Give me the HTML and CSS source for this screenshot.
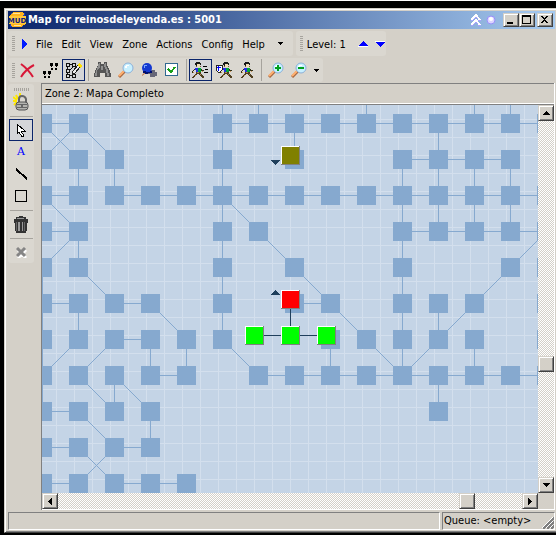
FILE: index.html
```html
<!DOCTYPE html>
<html lang="en">
<head>
<meta charset="utf-8">
<title>Map for reinosdeleyenda.es : 5001</title>
<link rel="stylesheet" href="styles.css">
</head>
<body>
<svg class="defs" aria-hidden="true">
  <symbol id="walker" viewBox="0 0 12 16">
    <path fill="#181818" d="M4 0h4v1h1v2H8V2H5v2H4V3H3V1h1z"/>
    <path fill="#f0e0b8" d="M5 2h3v3H5z"/>
    <path fill="#806040" d="M4 4h1v1H4zM8 4h1v1H8z"/>
    <path fill="#00a838" d="M5 6h4v4H6V7H5z"/>
    <path fill="#2430e8" d="M3 6h3v4H4V8H3z"/>
    <path fill="#303018" d="M2 7h1v1H2v1H1v2H0V9h1V8h1zM9 7h1v1h2v1H9z"/>
    <path fill="#c89050" d="M1 10h1v1H1zM10 9h1v1h-1z"/>
    <path fill="#504020" d="M4 10h5v2h1v1h1v1h1v2h-2v-1H9v-1H8v-1H7v-1H5v1H4v1H3v1H2v1H0v-1h1v-1h1v-1h1v-1h1z"/>
    <path fill="#b08858" d="M5 10h2v1H5zM3 13h1v1H3zM8 12h1v1H8z"/>
  </symbol>
  <symbol id="lens" viewBox="0 0 16 16">
    <path stroke="#a86840" stroke-width="3" d="M1 15l6-6"/><path stroke="#ffb070" stroke-width="2" d="M1 14l5-5"/>
    <circle cx="10" cy="6" r="5" fill="#c8f0ff" stroke="#8cb0d8" stroke-width="1"/><path fill="#fff" d="M8 3h3v1H9v2H7V4h1z"/>
  </symbol>
</svg>

<div class="window">
  <header class="title">
    <svg class="logo" width="17" height="16" viewBox="0 0 17 16" aria-hidden="true">
      <path fill="#183cc0" d="M2 1h14v3H2zM1 12h13v3H1z"/>
      <path fill="#ffb41e" d="M2 2l3-2h8l2 2-2 2H5L0 6V4zM1 13l2-2h12l2-2v3l-3 1-2 2H4z"/>
      <path fill="#ffe49a" d="M4 1h7v1H4zM5 13h7v1H5z"/><path fill="#ffc83c" d="M0 4h17v8H0z"/>
      <text class="logo-text" x="8" y="11" text-anchor="middle">MUD</text>
    </svg>
    <h1>Map for reinosdeleyenda.es : 5001</h1>
    <button class="ghost" aria-label="Roll up"><svg width="11" height="12" fill="none" stroke="#fff" stroke-width="2"><path stroke="#a8a0ff" d="M1 7l5-5 4 5M1 12l5-5 4 5"/><path d="M1 6l5-5 4 5M1 11l5-5 4 5"/></svg></button>
    <button class="ghost" aria-label="Stay on top"><svg class="smooth" width="10" height="10"><circle cx="5" cy="5" r="4" fill="#dcd4ff" stroke="#9890f8"/><circle cx="5" cy="4" r="2" fill="#fff"/></svg></button>
    <div class="caption-buttons">
      <button class="raised cap" aria-label="Minimize"><svg width="10" height="10"><path d="M1 7h6v2H1z"/></svg></button>
      <button class="raised cap" aria-label="Maximize"><svg width="10" height="10"><path fill-rule="evenodd" d="M0 0h9v9H0zM1 2v6h7V2z"/></svg></button>
      <button class="raised cap close" aria-label="Close"><svg width="10" height="10"><path d="M1 1h2v1h1v1h1V2h1V1h2v1H7v1H6v1H5v1h1v1h1v1h1v1H6V7H5V6H4v1H3v1H1V7h1V6h1V5h1V4H3V3H2V2H1z"/></svg></button>
    </div>
  </header>

  <div class="bars">
    <nav class="band menu">
      <i class="grip"></i>
      <svg class="play" width="6" height="10" aria-hidden="true"><path fill="#001cff" d="M0 0l5 5-5 5z"/></svg>
      <button>File</button><button>Edit</button><button>View</button><button>Zone</button><button>Actions</button><button>Config</button><button>Help</button>
      <button class="more" aria-label="More menus"><svg width="5" height="3"><path d="M0 0h5v1H4v1H3v1H2V2H1V1H0z"/></svg></button>
    </nav>
    <div class="band level">
      <i class="grip"></i>
      <span>Level: 1</span>
      <button class="up" aria-label="Level up"><svg width="10" height="6"><path fill="#00f" d="M5 0l5 5H0z"/><path fill="#fff" d="M0 5h10v1H0z"/></svg></button>
      <button class="down" aria-label="Level down"><svg width="10" height="6"><path fill="#fff" d="M0 0h10v1H0z"/><path fill="#00f" d="M0 1h10L5 6z"/></svg></button>
    </div>
  </div>

  <div class="bars">
    <div class="band tools" role="toolbar" aria-label="Map tools">
      <i class="grip"></i>
      <button aria-label="Close map"><svg class="smooth" width="15" height="15" fill="none" stroke="#d81838" stroke-width="2"><path d="M1 1q7 5 12 13M14 2Q6 6 1 14"/></svg></button>
      <button aria-label="Follow"><svg width="17" height="15"><path d="M8 0h3v3h-1v1H9V3H8zM13 0h3v3h-1v1h-1V3h-1zM9 5h2v2H9zM13 5h2v2h-2zM1 8h3v3H3v1H2v-1H1zM6 8h3v3H8v1H7v-1H6zM2 13h2v2H2zM6 13h2v2H6z"/></svg></button>
      <button class="on" aria-label="Create map" aria-pressed="true"><svg width="17" height="16"><path fill="none" stroke="#111" d="M1 1h3v3H1zM7 1h3v3H7zM1 7h3v3H1zM1 12h3v3H1zM4 2h3M2 4v3M2 10v2M4 9l5-5M4 13h4M7 12h3v3H7z"/><path fill="#eee" stroke="#222" d="M7 13l1-4 6-7 2 2-6 7z"/><path fill="#ffe000" d="M12 3l2-2 3 3-2 2z"/></svg></button>
      <i class="sep"></i>
      <button aria-label="Find"><svg width="17" height="16"><path fill="#555" d="M4 0h3v2h3V0h3v3l2 4 2 5v3h-6v-4H6v4H0v-3l2-5 2-4z"/><path fill="#909090" d="M5 1h1v4L3 9v5H1v-2l2-5zM11 1h1v3l2 4 1 6h-2l-1-6-2-4zM7 4h2v4H7z"/></svg></button>
      <button aria-label="Zoom"><svg class="smooth" width="16" height="16"><use href="#lens"/></svg></button>
      <button aria-label="Locate"><svg class="smooth" width="17" height="16"><path fill="#667" d="M7 8h8v2h2v4h-2v1h-5v-3H7z"/><path fill="#c07040" d="M2 13l4-4 1 1-5 4z"/><circle cx="7" cy="6" r="5" fill="#1438d0"/><path fill="#78a8ff" d="M4 3h3v1H5v2H4z"/><path fill="#001070" d="M3 9h3v1h4V9h2v2H8v1H5v-1H3z"/></svg></button>
      <button aria-label="Verify"><svg width="13" height="14"><path fill="#fff" stroke="#306890" d="M0.500 0.500h12v12h-12z"/><path fill="none" stroke="#18a018" stroke-width="2" d="M3 6l3 3 4-5"/></svg></button>
      <i class="sep"></i>
      <button class="on" aria-label="Fast walk" aria-pressed="true"><svg width="17" height="16"><use href="#walker" width="12" height="16"/><path d="M11 4h4v1h-4zM13 7h3v1h-3zM12 10h4v1h-4z"/></svg></button>
      <button aria-label="Safe walk"><svg width="17" height="16"><use href="#walker" x="5" width="12" height="16"/><path fill="#fff" stroke="#222" d="M1 3h6v5L4 11 1 8z"/><path fill="#00f" d="M3 4h1v1h2v1H4v3H3V6H2V5h1z"/></svg></button>
      <button aria-label="Walk"><svg width="12" height="16"><use href="#walker"/></svg></button>
      <i class="sep"></i>
      <button aria-label="Zoom in"><svg class="smooth" width="16" height="16"><use href="#lens"/><path fill="#00a020" d="M9 3h2v2h2v2h-2v2H9V7H7V5h2z"/></svg></button>
      <button aria-label="Zoom out"><svg class="smooth" width="16" height="16"><use href="#lens"/><path fill="#00a020" d="M7 5h6v2H7z"/></svg></button>
      <button class="more" aria-label="More tools"><svg width="5" height="3"><path d="M0 0h5v1H4v1H3v1H2V2H1V1H0z"/></svg></button>
    </div>
  </div>

  <main class="body">
    <aside class="side">
      <div class="palette" role="toolbar" aria-label="Drawing tools">
        <i class="grip wide"></i>
        <button aria-label="Lock"><svg class="smooth" width="17" height="18"><path stroke="#ffe800" stroke-width="2" d="M0 4l4 3M3 2l2 4M0 8h4M1 12l3-3M7 0v3"/><path fill="none" stroke="#666" stroke-width="2" d="M6 10V6q0-3 3-3t4 3v4"/><rect x="3" y="9" width="12" height="8" rx="3" fill="#b4b4b0" stroke="#555"/><path fill="#666" d="M4 11h10v1H4zM4 14h10v1H4zM8 11h2v4H8z"/></svg></button>
        <i class="rule"></i>
        <button class="on" aria-label="Select" aria-pressed="true"><svg width="10" height="15"><path fill="#fff" stroke="#000" d="M1 1v10l2-2 3 5 2-1-3-5h4z"/></svg></button>
        <button class="letter">A</button>
        <button aria-label="Line"><svg width="13" height="12"><path stroke="#000" stroke-width="2" d="M1 1l11 10"/></svg></button>
        <button aria-label="Rectangle"><svg width="12" height="12"><path fill="none" stroke="#000" d="M0.500 0.500h11v11h-11z"/></svg></button>
        <i class="rule"></i>
        <button aria-label="Delete"><svg width="14" height="17"><path fill="#333" d="M5 0h4v1h3v2h2v4h-1v8h-1v2H2v-2H1V7H0V3h2V1h3z"/><path fill="#999" d="M3 2h7v1H3zM4 6h2v9H4zM8 6h1v9H8z"/><path fill="#666" d="M2 6h1v9H2zM10 6h1v9h-1z"/></svg></button>
        <i class="rule"></i>
        <button aria-label="Cancel" disabled><svg class="smooth" width="11" height="11"><path stroke="#fff" stroke-width="3" d="M2 3l8 8M10 3l-8 8"/><path stroke="#858585" stroke-width="3" d="M1 1l8 8M9 1L1 9"/></svg></button>
      </div>
    </aside>
    <section class="view">
      <h2>Zone 2: Mapa Completo</h2>
      <div class="frame">
        <svg class="map" role="img" aria-label="Zone map">
          <g id="below" class="below"></g>
          <g class="links"><path d="M212 230.500h64M248.500 200v30"/></g>
          <g id="rooms"></g>
          <path class="arrow" d="M229 55h9v1h-1v1h-1v1h-1v1h-1v1h-1v-1h-1v-1h-1v-1h-1v-1h-1zM233 185h1v1h1v1h1v1h1v1h1v1h-9v-1h1v-1h1v-1h1v-1h1z"/>
        </svg>
        <div class="scroll vertical">
          <button class="raised" aria-label="Scroll up"><svg width="7" height="4"><path d="M3 0h1v1h1v1h1v1h1v1H0V3h1V2h1V1h1z"/></svg></button>
          <input type="range" aria-label="Vertical position" min="0" max="340" value="235">
          <button class="raised" aria-label="Scroll down"><svg width="7" height="4"><path d="M0 0h7v1H6v1H5v1H4v1H3V3H2V2H1V1H0z"/></svg></button>
        </div>
        <div class="scroll horizontal">
          <button class="raised" aria-label="Scroll left"><svg width="4" height="7"><path d="M4 0v7H3V6H2V5H1V4H0V3h1V2h1V1h1V0z"/></svg></button>
          <input type="range" aria-label="Horizontal position" min="0" max="448" value="401">
          <button class="raised" aria-label="Scroll right"><svg width="4" height="7"><path d="M0 0v7h1V6h1V5h1V4h1V3H3V2H2V1H1V0z"/></svg></button>
        </div>
      </div>
    </section>
  </main>

  <footer class="status">
    <div class="cell message"></div>
    <div class="cell queue">Queue: &lt;empty&gt;
      <svg class="sizer" width="12" height="12" aria-hidden="true"><path stroke="#fff" stroke-width="1" d="M0 11L11 0M4 11l7-7M8 11l3-3"/><path stroke="#808080" stroke-width="2" d="M1 12L12 1M5 12l7-7M9 12l3-3"/></svg>
    </div>
  </footer>
</div>
<script src="map.js"></script>
</body>
</html>
```
FILE: styles.css
```css
* { box-sizing: border-box; }

body {
  margin: 0;
  height: 100vh;
  padding: 7px 0 2px 4px;
  border-top: 1px solid #fff;
  background: #000;
  color: #000;
  font: 11px/16px "DejaVu Sans Condensed", "DejaVu Sans", sans-serif;
  font-stretch: condensed;
  overflow: hidden;
}

svg { display: block; flex: none; shape-rendering: crispEdges; }
.smooth { shape-rendering: auto; }
i { display: block; flex: none; }
.defs { position: absolute; width: 0; height: 0; }
.defs symbol { shape-rendering: inherit; }

button {
  display: flex;
  align-items: center;
  justify-content: center;
  margin: 0;
  padding: 0;
  border: 0;
  background: none;
  color: inherit;
  font: inherit;
}

.raised {
  background: #d4d0c8;
  border: 1px solid;
  border-color: #d4d0c8 #404040 #404040 #d4d0c8;
  box-shadow: inset 1px 1px #fff, inset -1px -1px #808080;
}

.window {
  display: flex;
  flex-direction: column;
  height: 100%;
  background: #d4d0c8;
  border: 1px solid #d4d0c8;
  border-right: 0;
  border-bottom-color: #404040;
  box-shadow: inset 1px 1px #fff, inset 0 -1px #808080;
  padding: 2px 0 2px 3px;
}

/* Title bar */
.title {
  display: flex;
  align-items: center;
  flex: none;
  height: 18px;
  margin-right: 1px;
  padding-right: 2px;
  background: linear-gradient(to right, #0a246a, #a6caf0);
  color: #fff;
}
.title h1 {
  flex: 1;
  margin: 0 0 0 2px;
  font-size: 11px;
  line-height: 16px;
  font-weight: bold;
  white-space: nowrap;
}
.logo { margin-left: 1px; }
.logo-text { font: bold 7px "DejaVu Sans", sans-serif; fill: #102080; }
.ghost { width: 16px; }
.caption-buttons { display: flex; margin-left: 4px; }
.cap { width: 16px; height: 14px; }
.close { margin-left: 2px; }

/* Menu and tool bars */
.bars { display: flex; flex: none; gap: 3px; height: 27px; padding: 2px 0 0; }
.band {
  display: flex;
  align-items: center;
  height: 25px;
  border-radius: 3px;
  background: #dad7d0;
}
.grip {
  width: 3px;
  height: 15px;
  margin: 0 4px;
  background: repeating-linear-gradient(#a6a39d 0 1px, #dad7d0 1px 2px);
}
.menu { gap: 1px; }
.menu .play { margin: 0 3px 0 2px; }
.menu button { padding: 2px 4px 0; }
.menu .more { padding: 0 10px 0 8px; }
.level span { padding-top: 2px; }
.level .up { margin-left: 12px; }
.level .down { margin: 0 1px 0 7px; }
.tools { height: 24px; }
.tools .grip { margin: 0 1px 0 4px; }
.tools button { width: 23px; height: 22px; }
.tools .more { width: 13px; }
.sep { width: 1px; height: 22px; margin: 0 2px 0 3px; background: #a6a39d; }
.tools .on, .palette .on { border: 1px solid #0a246a; background: #d4d5d8; }

/* Drawing palette */
.body { display: flex; flex: 1; min-height: 0; }
.side { flex: none; width: 33px; padding: 1px 7px 0 0; }
.palette {
  display: flex;
  flex-direction: column;
  align-items: center;
  padding: 4px 1px 0;
  border-radius: 3px;
  background: #dad7d0;
}
.palette button { width: 24px; height: 22px; }
.palette .letter { color: #00f; font: 11px/16px "DejaVu Serif", serif; }
.wide {
  width: 15px;
  height: 3px;
  margin: 0;
  background: repeating-linear-gradient(to right, #a6a39d 0 1px, #dad7d0 1px 2px);
}
.rule { width: 23px; height: 1px; margin: 3px 0 2px; background: #a6a39d; }

/* Map view */
.view {
  display: flex;
  flex: 1;
  flex-direction: column;
  min-width: 0;
  margin-right: 1px;
  border-left: 1px solid #808080;
  border-right: 1px solid #fff;
}
.view h2 {
  flex: none;
  height: 21px;
  margin: 0;
  padding: 2px 3px;
  border-top: 1px solid #808080;
  border-bottom: 1px solid #fff;
  font-size: 11px;
  line-height: 16px;
  font-weight: normal;
}
.frame {
  display: grid;
  flex: 1;
  grid-template: minmax(0, 1fr) 16px / minmax(0, 1fr) 16px;
  min-height: 0;
  border-top: 1px solid #808080;
  border-bottom: 1px solid #fff;
}
.map {
  width: 100%;
  height: 100%;
  overflow: hidden;
  background:
    linear-gradient(to right, #d3dfed 1px, transparent 1px) 14px 0 / 18px 18px,
    linear-gradient(#d3dfed 1px, #c4d4e6 1px) 0 14px / 18px 18px;
}
.below rect { fill: #86a9cf; }
.below line { stroke: #86a9cf; }
.links { stroke: #20405c; }
.arrow { fill: #20405c; }
.room .light { fill: #fff; }
.room .shade { fill: #808080; }
.olive .face { fill: #808000; }
.red .face { fill: #f00; }
.green .face { fill: #0f0; }

.scroll {
  display: flex;
  background: conic-gradient(#fff 25%, #d4d0c8 0 50%, #fff 0 75%, #d4d0c8 0) 0 0 / 2px 2px;
}
.scroll button { flex: none; width: 16px; height: 16px; }
.vertical { flex-direction: column; }
.scroll input {
  appearance: none;
  flex: 1;
  min-width: 0;
  min-height: 0;
  margin: 0;
  background: none;
}
.horizontal input { height: 16px; }
.vertical input { width: 16px; writing-mode: vertical-lr; }
.scroll input::-webkit-slider-thumb {
  appearance: none;
  box-sizing: border-box;
  width: 16px;
  height: 16px;
  border: 1px solid;
  border-color: #d4d0c8 #404040 #404040 #d4d0c8;
  background: #d4d0c8;
  box-shadow: inset 1px 1px #fff, inset -1px -1px #808080;
}

/* Status bar */
.status { display: flex; flex: none; gap: 2px; height: 20px; padding: 2px 1px 0 0; }
.cell {
  border: 1px solid;
  border-color: #808080 #fff #fff #808080;
}
.message { flex: 1; }
.queue { position: relative; width: 113px; padding: 0 1px; white-space: nowrap; }
.sizer { position: absolute; right: 0; bottom: 0; }
```
FILE: map.js
```js
const NS = 'http://www.w3.org/2000/svg';
const STEP = 36;
const SIZE = 19;

// Columns that hold a room, row by row.
const rows = [
  [0, 1, 5, 6, 7, 8, 9, 10, 11, 12, 13, 14],
  [0, 1, 2, 5, 7, 10, 11, 12, 13],
  [0, 1, 2, 3, 4, 5, 6, 7, 8, 9, 10, 11, 12, 13, 14],
  [0, 1, 5, 6, 10, 11, 12, 13, 14],
  [0, 1, 5, 7, 10, 13, 14],
  [0, 1, 2, 3, 5, 7, 8, 10, 11, 12, 14],
  [0, 1, 2, 3, 4, 5, 8, 9, 10, 11, 12, 14],
  [0, 1, 2, 3, 4, 6, 7, 8, 9, 10, 11, 12, 13, 14],
  [0, 1, 2, 3, 11],
  [0, 1, 2, 3],
  [0, 1, 2, 3, 4]
];

// Exits as [column, row, column, row].
const exits = [
  [0, 0, 1, 0], [0, 0, 1, 1], [1, 0, 0, 1], [1, 0, 2, 1], [1, 1, 1, 2], [2, 1, 2, 2],
  [0, 2, 1, 2], [2, 2, 14, 2], [0, 2, 1, 3], [0, 3, 1, 3], [1, 3, 0, 4], [1, 3, 1, 4],
  [1, 4, 2, 5], [0, 5, 1, 5], [2, 5, 3, 5], [1, 5, 1, 6], [3, 5, 4, 6], [2, 6, 3, 6],
  [1, 6, 0, 7], [2, 6, 1, 7], [3, 6, 3, 7], [4, 6, 4, 7], [3, 7, 4, 7], [0, 4, 0, 8],
  [1, 7, 2, 8], [2, 7, 2, 8], [2, 7, 3, 8], [0, 8, 1, 8], [1, 8, 2, 9], [3, 8, 3, 9],
  [0, 9, 1, 9], [2, 9, 3, 9], [1, 9, 2, 10], [2, 9, 1, 10], [0, 10, 1, 10], [2, 10, 4, 10],
  [5, 0, 14, 0], [5, -1, 5, 6], [6, -1, 6, 0], [9, -1, 9, 0], [12, -1, 12, 0], [13, -1, 13, 0],
  [7, 0, 7, 1], [11, 0, 11, 3], [10, 1, 13, 1], [10, 1, 10, 7], [12, 1, 12, 3], [13, 1, 13, 3],
  [10, 3, 14, 3], [14, 3, 11, 6], [11, 5, 11, 6], [11, 6, 10, 7], [12, 6, 12, 7],
  [5, 2, 10, 7], [7, 5, 8, 5], [5, 6, 6, 7], [8, 6, 8, 7], [6, 7, 14, 7], [11, 7, 11, 8]
];

const rooms = [
  ['olive', 239, 41], ['red', 239, 185],
  ['green', 203, 221], ['green', 239, 221], ['green', 275, 221]
];

function add(parent, name, attrs) {
  const node = document.createElementNS(NS, name);
  for (const key in attrs) node.setAttribute(key, attrs[key]);
  parent.appendChild(node);
  return node;
}

const below = document.getElementById('below');
const cx = c => c * STEP + 0.5;
const cy = r => r * STEP + 18.5;

exits.forEach(([a, b, c, d]) => add(below, 'line', { x1: cx(a), y1: cy(b), x2: cx(c), y2: cy(d) }));
rows.forEach((cols, r) => cols.forEach(c =>
  add(below, 'rect', { x: c * STEP - 9, y: r * STEP + 9, width: SIZE, height: SIZE })));

const layer = document.getElementById('rooms');
rooms.forEach(([kind, x, y]) => {
  const g = add(layer, 'g', { class: 'room ' + kind });
  add(g, 'rect', { class: 'shade', x, y, width: SIZE, height: SIZE });
  add(g, 'rect', { class: 'light', x, y, width: SIZE - 1, height: SIZE - 1 });
  add(g, 'rect', { class: 'face', x: x + 1, y: y + 1, width: SIZE - 2, height: SIZE - 2 });
});
```
